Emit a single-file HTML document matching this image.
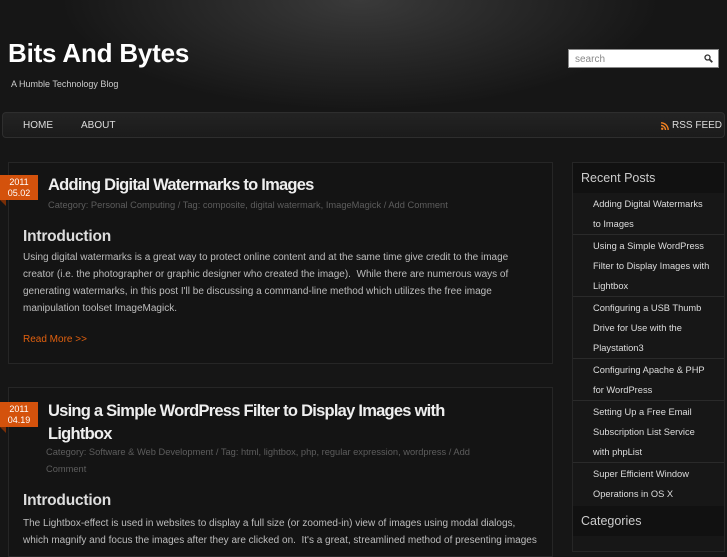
<!DOCTYPE html>
<html><head><style>
*{margin:0;padding:0;box-sizing:border-box}
body{width:727px;height:545px;overflow:hidden;background:#161616;font-family:"Liberation Sans",sans-serif;position:relative;color:#ccc}
.glow{position:absolute;left:0;top:0;width:727px;height:160px;background:radial-gradient(ellipse 300px 110px at 360px 0,#3a3a3a,rgba(22,22,22,0) 100%)}
.a{position:absolute;white-space:nowrap}
h1{position:absolute;left:8px;top:38px;font-size:26px;color:#fff;font-weight:bold;letter-spacing:-0.2px}
.search{position:absolute;left:568px;top:49px;width:151px;height:19px;background:#fff;border:1px solid #888;font-size:10px;color:#888;padding:4px 6px}
.nav{position:absolute;left:2px;top:112px;width:723px;height:26px;background:linear-gradient(#232323,#1b1b1b);border:1px solid #2e2e2e;border-radius:4px;font-size:10px;color:#ddd}
.box{position:absolute;border:1px solid #262626;background:#141414}
.badge{position:absolute;left:0;width:38px;height:25px;background:#d4520c;color:#fff;font-size:9px;text-align:center;line-height:11px;padding-top:2px}
.badge:after{content:"";position:absolute;left:0;bottom:-6px;border-top:6px solid #7a2e06;border-left:6px solid transparent}
.t{font-size:16.5px;color:#eee;letter-spacing:-0.75px;font-weight:bold}
.m{font-size:9.3px;color:#5d5d5d}
.i{font-size:15.5px;color:#ddd;font-weight:bold;letter-spacing:-0.2px}
.b{font-size:10px;color:#bdbdbd;line-height:17px}
.side{position:absolute;left:572px;top:162px;width:153px;height:390px;border:1px solid #262626;background:#171717}
.sh{height:30px;background:#111;font-size:12.5px;color:#ccc;padding:8px 8px}
.si{border-bottom:1px solid #2a2a2a;padding:1px 12px 0 20px;font-size:9.3px;line-height:20px;color:#ddd}
</style></head><body>
<div class="glow"></div>
<h1>Bits And Bytes</h1>
<div class="a" style="left:11px;top:79px;font-size:9px;color:#ccc">A Humble Technology Blog</div>
<div class="search">search<svg style="position:absolute;right:5px;top:4px" width="9" height="9" viewBox="0 0 9 9"><circle cx="3.5" cy="3.5" r="2.5" stroke="#333" stroke-width="1.3" fill="none"/><path d="M5.3 5.3L8.3 8.3" stroke="#333" stroke-width="1.8"/></svg></div>
<div class="nav">
<span class="a" style="left:20px;top:7px">HOME</span>
<span class="a" style="left:78px;top:7px">ABOUT</span>
<svg class="a" style="left:658px;top:9px" width="8" height="8" viewBox="0 0 8 8"><circle cx="1.2" cy="6.8" r="1.2" fill="#f08020"/><path d="M0 3.5a4.5 4.5 0 0 1 4.5 4.5M0 0.8a7.2 7.2 0 0 1 7.2 7.2" stroke="#f08020" stroke-width="1.4" fill="none"/></svg>
<span class="a" style="left:669px;top:7px">RSS FEED</span>
</div>

<div class="box" style="left:8px;top:162px;width:545px;height:202px"></div>
<div class="badge" style="top:175px">2011<br>05.02</div>
<div class="a t" style="left:48px;top:176px">Adding Digital Watermarks to Images</div>
<div class="a m" style="left:48px;top:200px">Category: Personal Computing / Tag: composite, digital watermark, ImageMagick / Add Comment</div>
<div class="a i" style="left:23px;top:228px">Introduction</div>
<div class="a b" style="left:23px;top:249px">Using digital watermarks is a great way to protect online content and at the same time give credit to the image<br>creator (i.e. the photographer or graphic designer who created the image).&nbsp; While there are numerous ways of<br>generating watermarks, in this post I'll be discussing a command-line method which utilizes the free image<br>manipulation toolset ImageMagick.</div>
<div class="a" style="left:23px;top:334px;font-size:10px;color:#e0600f">Read More &gt;&gt;</div>

<div class="box" style="left:8px;top:387px;width:545px;height:170px"></div>
<div class="badge" style="top:402px">2011<br>04.19</div>
<div class="a t" style="left:48px;top:400px;line-height:23px">Using a Simple WordPress Filter to Display Images with<br>Lightbox</div>
<div class="a m" style="left:46px;top:444px;line-height:17px">Category: Software &amp; Web Development / Tag: html, lightbox, php, regular expression, wordpress / Add<br>Comment</div>
<div class="a i" style="left:23px;top:492px">Introduction</div>
<div class="a b" style="left:23px;top:515px">The Lightbox-effect is used in websites to display a full size (or zoomed-in) view of images using modal dialogs,<br>which magnify and focus the images after they are clicked on.&nbsp; It's a great, streamlined method of presenting images</div>

<div class="side">
<div class="sh">Recent Posts</div>
<div class="si">Adding Digital Watermarks to Images</div>
<div class="si">Using a Simple WordPress Filter to Display Images with Lightbox</div>
<div class="si">Configuring a USB Thumb Drive for Use with the Playstation3</div>
<div class="si">Configuring Apache &amp; PHP for WordPress</div>
<div class="si">Setting Up a Free Email Subscription List Service with phpList</div>
<div class="si" style="border-bottom:none">Super Efficient Window Operations in OS X</div>
<div class="sh" style="margin-top:2px">Categories</div>
</div>
</body></html>
